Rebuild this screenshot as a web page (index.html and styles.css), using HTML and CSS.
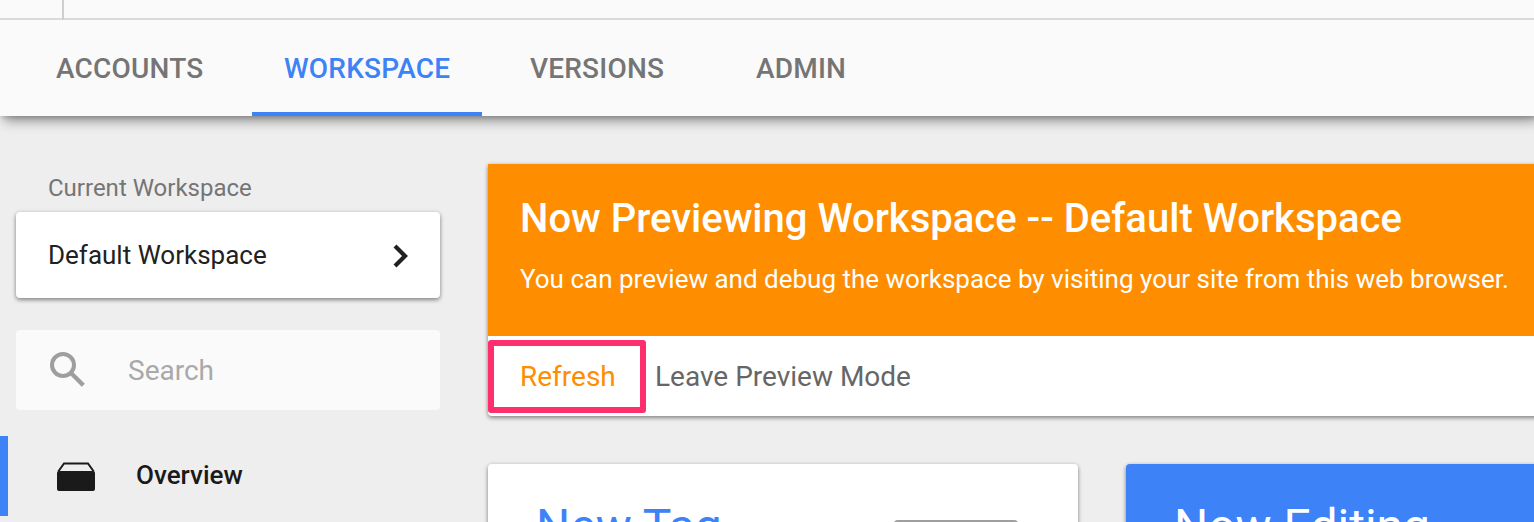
FILE: index.html
```html
<!DOCTYPE html>
<html lang="en">
<head>
<meta charset="utf-8">
<title>Workspace</title>
<link rel="stylesheet" href="styles.css">
</head>
<body>
<div class="app">
  <header class="header">
    <div class="topbar"><div class="topbar-cell"></div></div>
    <nav class="tabs">
      <a class="tab tab-accounts"><span>ACCOUNTS</span></a>
      <a class="tab tab-workspace active"><span>WORKSPACE</span></a>
      <a class="tab tab-versions"><span>VERSIONS</span></a>
      <a class="tab tab-admin"><span>ADMIN</span></a>
    </nav>
  </header>
  <div class="body">
    <aside class="sidebar">
      <div class="label"><span>Current Workspace</span></div>
      <div class="picker">
        <span class="picker-name">Default Workspace</span>
        <svg class="chevron" width="16" height="24" viewBox="0 0 16 24"><path d="M2 2 L12 12 L2 22" fill="none" stroke="#202124" stroke-width="4.2"/></svg>
      </div>
      <div class="search">
        <svg class="search-icon" width="36" height="36" viewBox="0 0 36 36"><circle cx="13" cy="13" r="11" fill="none" stroke="#9e9e9e" stroke-width="4"/><path d="M21.5 21.5 L33.3 33.3" stroke="#9e9e9e" stroke-width="4.3"/></svg>
        <span class="search-text">Search</span>
      </div>
      <div class="nav-item">
        <svg class="box-icon" width="40" height="30" viewBox="0 0 40 30"><path d="M2.3 9.5 L8 1.5 H32 L37.7 9.5" fill="none" stroke="#1a1a1a" stroke-width="2"/><rect x="1" y="9" width="38" height="20" rx="2" fill="#1a1a1a"/></svg>
        <span class="nav-text">Overview</span>
      </div>
    </aside>
    <main class="main">
      <section class="preview">
        <div class="banner">
          <h1 class="title"><span>Now Previewing Workspace -- Default Workspace</span></h1>
          <p class="sub"><span>You can preview and debug the workspace by visiting your site from this web browser.</span></p>
        </div>
        <div class="actions">
          <a class="refresh"><span>Refresh</span></a>
          <a class="leave"><span>Leave Preview Mode</span></a>
        </div>
      </section>
      <div class="cards">
        <section class="card new-tag">
          <h2 class="card-title"><span>New Tag</span></h2>
          <div class="tag-art"></div>
        </section>
        <section class="card editing">
          <h2 class="card-title"><span>Now Editing</span></h2>
        </section>
      </div>
    </main>
  </div>
</div>
</body>
</html>
```
FILE: styles.css
```css
* { box-sizing: border-box; }
body { margin: 0; background: #eee; font-family: Roboto, "Liberation Sans", sans-serif; }
h1, h2, p { margin: 0; font-weight: 400; }
.app { width: 1534px; height: 522px; overflow: hidden; white-space: nowrap; }
.header { height: 116px; background: #fafafa; box-shadow: 4px 4px 12px rgba(0,0,0,.45), 2px 2px 4px rgba(0,0,0,.12); position: relative; }
.topbar { height: 20px; border-bottom: 2px solid #dadada; display: flex; }
.topbar-cell { width: 64px; height: 20px; border-right: 2px solid #cfcfcf; flex: none; }
.tabs { display: flex; height: 96px; padding-left: 24px; }
.tab { height: 96px; line-height: 98px; font-size: 28px; font-weight: 500; letter-spacing: .2px; color: #757575; padding-left: 32px; }
.tab-accounts { width: 228px; }
.tab-workspace { width: 230px; }
.tab-versions { width: 225px; padding-left: 48px; }
.tab-admin { padding-left: 49px; }
.tab.active { color: #3d82f7; border-bottom: 4px solid #3d82f7; }
.body { display: flex; height: 406px; }
.sidebar { width: 488px; flex: none; padding-top: 56px; }
.label { height: 32px; line-height: 32px; font-size: 24px; color: #757575; padding-left: 48px; }
.picker { margin: 8px 0 0 16px; width: 424px; height: 86px; background: #fff; border-radius: 4px; box-shadow: 0 2px 4px rgba(0,0,0,.42), 0 0 4px rgba(0,0,0,.08); display: flex; align-items: center; justify-content: space-between; padding: 0 31px 0 32px; }
.chevron { margin-top: 1px; }
.picker-name { font-size: 26px; color: #212121; }
.search { margin: 32px 0 0 16px; width: 424px; height: 80px; background: #fafafa; border-radius: 4px; display: flex; align-items: center; padding-left: 34px; }
.search-text { margin-left: 42px; font-size: 28px; color: #a9a9a9; }
.nav-item { margin-top: 26px; height: 80px; border-left: 8px solid #3d82f7; display: flex; align-items: center; padding-left: 48px; }
.box-icon { margin-top: 1px; }
.nav-text { margin-left: 40px; margin-top: -2px; font-size: 26px; font-weight: 500; color: #1a1a1a; }
.main { width: 1046px; padding-top: 48px; }
.preview { width: 1080px; height: 252px; background: #fff; border-radius: 0 0 4px 4px; box-shadow: 0 2px 4px rgba(0,0,0,.42), 0 0 4px rgba(0,0,0,.08); }
.banner { height: 172px; background: #ff8d00; color: #fff; padding: 31px 0 0 32px; }
.title { height: 48px; line-height: 48px; font-size: 40px; font-weight: 500; }
.sub { margin-top: 20px; height: 32px; line-height: 32px; font-size: 26px; }
.actions { height: 80px; display: flex; line-height: 74px; font-size: 28px; padding-top: 4px; }
.refresh { width: 158px; height: 73px; line-height: 61px; border: 6px solid #ff2f6d; border-radius: 3px; color: #ff8d00; padding-left: 26px; }
.leave { padding-left: 9px; color: #666; }
.cards { display: flex; gap: 48px; margin-top: 48px; }
.card { height: 200px; border-radius: 4px; flex: none; display: flex; padding-top: 35px; box-shadow: 0 2px 4px rgba(0,0,0,.42), 0 0 4px rgba(0,0,0,.08); }
.new-tag { width: 590px; background: #fff; color: #3d82f7; padding-left: 48px; }
.card-title { height: 56px; line-height: 56px; font-size: 48px; }
.new-tag .card-title { width: 357px; }
.tag-art { width: 126px; height: 90px; margin-top: 21px; border-radius: 5px; background: #9e9e9e; }
.editing { width: 590px; background: #3d82f7; color: #fff; padding-left: 48px; }
```
